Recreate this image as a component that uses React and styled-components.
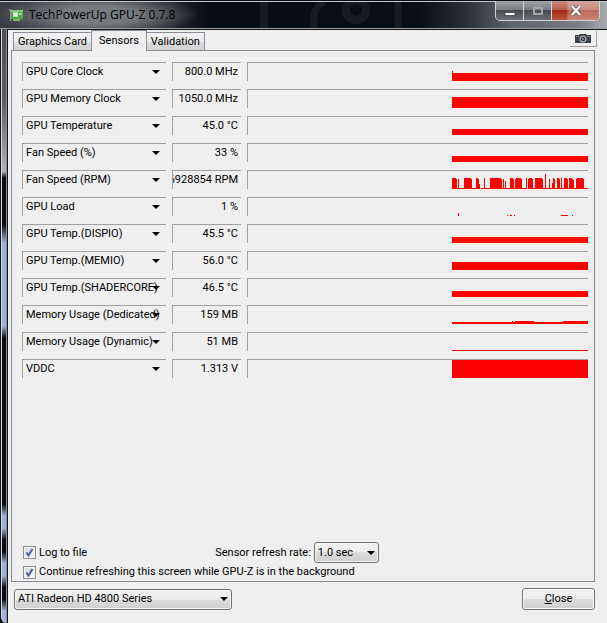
import React, { useState } from "react";
import styled, { createGlobalStyle } from "styled-components";

const GlobalStyle = createGlobalStyle`
  * {
    box-sizing: border-box;
  }

  body {
    background: #efefef;
    color: #000000;
    font-family: Roboto, "Liberation Sans", sans-serif;
    font-size: 11px;
    line-height: 16px;
    margin: 0;
  }

  button,
  select {
    color: inherit;
    font: inherit;
  }
`;

const Window = styled.div`
  background: #000000;
  display: flex;
  flex-direction: column;
  min-height: 100vh;
`;

const TitleBar = styled.header`
  align-items: flex-start;
  background:
    radial-gradient(ellipse 100px 22px at 98px 14px, rgba(150, 153, 157, 0.7) 40%, transparent 100%),
    linear-gradient(90deg, #3c4046 0, #24282e 170px, #080c13 210px, #0a0e15 420px, #2a2f37 465px, #5d6168 510px, #7b7f85 580px, #a9acb1 100%);
  border-bottom: 1px solid #9a9da1;
  border-top: 1px solid #0b0a10;
  box-shadow: inset 0 1px 0 #c9cbd1;
  display: flex;
  height: 29px;
  justify-content: space-between;
  overflow: hidden;
  padding-left: 9px;
  position: relative;
`;

const Title = styled.h1`
  align-items: center;
  display: flex;
  font-family: "Open Sans", "Noto Sans", sans-serif;
  font-size: 12px;
  font-weight: 400;
  gap: 6px;
  height: 28px;
  margin: 0;
  position: relative;
`;

const Backdrop = styled.svg`
  left: 250px;
  position: absolute;
  top: 1px;
`;

const WindowButtons = styled.div`
  border: 1px solid #d2d4d8;
  border-radius: 0 0 5px 5px;
  border-top: 0;
  display: flex;
  height: 20px;
  margin-right: 7px;
  overflow: hidden;
  position: relative;
`;

const WindowButton = styled.button`
  align-items: center;
  background: ${props =>
    props.$close
      ? "linear-gradient(90deg, transparent 30%, rgba(225, 205, 202, 0.4) 36%), linear-gradient(#c98c80 0, #b9604f 45%, #a32a12 50%, #b8583e 100%)"
      : "linear-gradient(#9fa2a6 0, #7b7e83 45%, #4a4d52 50%, #6a6d72 100%)"};
  border: 0;
  border-right: ${props => (props.$close ? "0" : "1px solid #d2d4d8")};
  display: flex;
  justify-content: center;
  padding: 0;
  width: ${props => (props.$close ? "47px" : "28px")};
`;

const Frame = styled.div`
  display: flex;
  flex: 1;
`;

const FrameEdge = styled.div`
  background: linear-gradient(
    #4c4e52 0,
    #5c5d62 12%,
    #8a868b 18%,
    #b5b0b4 24%,
    #0c0e12 25%,
    #0c0e12 33%,
    #9fb4d5 36%,
    #9fb4d5 50%,
    #0c0e12 52%,
    #0c0e12 80%,
    #9fb4d5 82%,
    #9fb4d5 84%,
    #0c0e12 86%,
    #0c0e12 88%,
    #9fb4d5 90%,
    #9fb4d5 92%,
    #0c0e12 94%,
    #0c0e12 96%,
    #9fb4d5 98%
  );
  border-bottom-left-radius: 6px;
  border-left: 1px solid #15151a;
  border-right: 1px solid #101216;
  box-shadow: inset 1px 0 0 #d5d9df, inset -1px 0 0 #8f9296;
  width: 8px;
`;

const Client = styled.main`
  background: #efefef;
  border-top: 1px solid #101216;
  display: flex;
  flex: 1;
  flex-direction: column;
  min-width: 0;
  padding: 0 12px 13px 3px;
`;

const TabBar = styled.div`
  align-items: flex-end;
  display: flex;
  height: 20px;
  justify-content: space-between;
`;

const TabList = styled.div`
  align-items: flex-end;
  display: flex;
  padding-left: 2px;
`;

const Tab = styled.button`
  background: ${props =>
    props.$active
      ? "#efefef"
      : "linear-gradient(#f2f2f2 0, #ebebeb 50%, #dddddd 50%, #d2d2d2 100%)"};
  border: 1px solid #8b8b98;
  border-bottom: 0;
  height: ${props => (props.$active ? "21px" : "18px")};
  line-height: ${props => (props.$active ? "18px" : "16px")};
  margin-bottom: ${props => (props.$active ? "-1px" : "0")};
  margin-right: -1px;
  padding: 0 ${props => (props.$active ? "7px" : "4px")};
  position: relative;
`;

const CameraButton = styled.button`
  align-items: center;
  background: #efefef;
  border: 0;
  border-bottom: 1px solid #a0a0a0;
  border-right: 1px solid #a0a0a0;
  display: flex;
  height: 16px;
  justify-content: center;
  margin: 0 -2px 3px 0;
  padding: 0;
  width: 27px;
`;

const Panel = styled.section`
  border: 1px solid #8b8b98;
  display: flex;
  flex: 1;
  flex-direction: column;
  justify-content: space-between;
  padding: 11px 6px 1px 10px;
`;

const SensorList = styled.div`
  display: flex;
  flex-direction: column;
  gap: 8px;
`;

const SensorRow = styled.div`
  display: grid;
  gap: 6px;
  grid-template-columns: 144px 69px 1fr;
  height: 19px;
`;

const Well = styled.div`
  border-left: 1px solid #a0a0a0;
  border-top: 1px solid #a0a0a0;
  display: flex;
  min-width: 0;
  overflow: hidden;
`;

const SensorPicker = styled(Well)`
  position: relative;
`;

const SensorSelect = styled.select`
  appearance: none;
  background: transparent;
  border: 0;
  outline: 0;
  padding: 0 0 0 3px;
  width: 100%;
`;

const Arrow = styled.svg`
  pointer-events: none;
  position: absolute;
  right: ${props => props.$right};
  top: 50%;
  transform: translateY(-50%);
`;

const Reading = styled(Well)`
  align-items: center;
  justify-content: flex-end;
  padding-right: 3px;
  white-space: nowrap;
`;

const Graph = styled(Well)`
  align-items: flex-end;
  justify-content: flex-end;
`;

const Options = styled.div`
  display: flex;
  flex-direction: column;
  gap: 1px;
  padding-left: 1px;
`;

const OptionRow = styled.div`
  align-items: center;
  display: flex;
`;

const CheckLabel = styled.label`
  align-items: center;
  display: flex;
  gap: 3px;
`;

const CheckWrap = styled.span`
  display: grid;
  height: 13px;
  width: 13px;

  & > * {
    grid-area: 1 / 1;
  }
`;

const CheckBox = styled.input`
  appearance: none;
  background: linear-gradient(135deg, #d3d7dc, #f6f7f8);
  border: 1px solid #8e8f8f;
  box-shadow: inset 0 0 0 1px #f4f4f4;
  height: 13px;
  margin: 0;
  width: 13px;

  & + svg {
    pointer-events: none;
    visibility: hidden;
  }

  &:checked + svg {
    visibility: visible;
  }
`;

const RefreshRate = styled.div`
  align-items: center;
  display: flex;
  gap: 3px;
  margin-left: 128px;
`;

const ComboWrap = styled.span`
  display: block;
  position: relative;
  width: ${props => props.$width};
`;

const Combo = styled.select`
  appearance: none;
  background: linear-gradient(#f1f1f1 0, #ebebeb 50%, #dcdcdc 50%, #cfcfcf 100%);
  border: 1px solid #707070;
  border-radius: 3px;
  box-shadow: inset 0 0 0 1px #f5f5f5;
  display: block;
  height: 21px;
  padding: 0 3px;
  width: 100%;
`;

const Footer = styled.footer`
  align-items: center;
  display: flex;
  justify-content: space-between;
  padding: 6px 0 0 3px;
`;

const CloseButton = styled.button`
  background: linear-gradient(#f2f2f2 0, #ebebeb 50%, #dddddd 50%, #cfcfcf 100%);
  border: 1px solid #6b7578;
  border-radius: 3px;
  box-shadow: inset 0 0 0 1px #f7f9fa;
  height: 22px;
  padding: 0;
  width: 73px;
`;

// each graph is a list of [x, width, height] runs on a 136 x 18 plot
const flat = height => [[0, 136, height]];

const FAN_RPM = [
  [0, 28, 1], [29, 46, 1], [76, 60, 1],
  [0, 4, 11], [4, 1, 10], [6, 1, 10], [12, 7, 11], [19, 1, 10],
  [24, 2, 11], [26, 1, 10], [27, 1, 5], [32, 1, 11], [38, 11, 11],
  [49, 1, 10], [51, 1, 10], [53, 1, 8], [58, 3, 11], [61, 1, 10],
  [63, 1, 10], [64, 5, 11], [69, 1, 10], [74, 1, 11], [76, 1, 10],
  [77, 3, 11], [80, 1, 10], [83, 7, 11], [90, 1, 10], [93, 1, 15],
  [97, 1, 10], [100, 1, 6], [101, 1, 11], [102, 1, 10], [105, 2, 11],
  [107, 1, 10], [109, 1, 11], [112, 3, 11], [115, 1, 10], [117, 3, 11],
  [120, 1, 10], [121, 1, 9], [124, 1, 10], [125, 6, 11], [131, 1, 10]
];

const GPU_LOAD = [
  [6, 1, 3], [55, 1, 1], [58, 2, 1], [62, 1, 1], [109, 7, 1], [120, 1, 1]
];

const SENSORS = [
  { name: "GPU Core Clock", value: "800.0 MHz", runs: [...flat(8), [0, 1, 10]] },
  { name: "GPU Memory Clock", value: "1050.0 MHz", runs: flat(11) },
  { name: "GPU Temperature", value: "45.0 °C", runs: flat(6) },
  { name: "Fan Speed (%)", value: "33 %", runs: flat(6) },
  { name: "Fan Speed (RPM)", value: "6928854 RPM", runs: FAN_RPM },
  { name: "GPU Load", value: "1 %", runs: GPU_LOAD },
  { name: "GPU Temp.(DISPIO)", value: "45.5 °C", runs: flat(6) },
  { name: "GPU Temp.(MEMIO)", value: "56.0 °C", runs: flat(8) },
  { name: "GPU Temp.(SHADERCORE)", value: "46.5 °C", runs: flat(6) },
  {
    name: "Memory Usage (Dedicated)",
    value: "159 MB",
    runs: [...flat(2), [60, 1, 3], [63, 19, 3], [111, 25, 3]]
  },
  { name: "Memory Usage (Dynamic)", value: "51 MB", runs: flat(1) },
  { name: "VDDC", value: "1.313 V", runs: flat(18) }
];

const DropArrow = ({ right }) => (
  <Arrow $right={right} width="8" height="4" viewBox="0 0 8 4" aria-hidden="true">
    <path d="M0 0h8L4 4z" fill="#000000" />
  </Arrow>
);

const CardIcon = () => (
  <svg width="14" height="14" viewBox="0 0 14 14" aria-hidden="true">
    <path d="M0 1h2v12H1V3H0z" fill="#8f9496" />
    <rect x="2" y="2" width="12" height="9" fill="#4fa653" />
    <rect x="2" y="2" width="12" height="2" fill="#7cc97c" />
    <rect x="4" y="4" width="5" height="5" fill="#c6d9c3" />
    <rect x="5" y="5" width="3" height="3" fill="#e4ece2" />
    <rect x="10" y="5" width="3" height="2" fill="#9be09a" />
    <rect x="4" y="11" width="7" height="2" fill="#8fae68" />
  </svg>
);

const CameraIcon = () => (
  <svg width="16" height="10" viewBox="0 0 16 10" aria-hidden="true">
    <path d="M0 1h4l1-1h6l1 1h4v8H0z" fill="#3b4147" />
    <path d="M1 2h3v1H1zM12 2h3v1h-3z" fill="#7d8489" />
    <circle cx="8" cy="5" r="3.5" fill="#a9afb3" />
    <circle cx="8" cy="5" r="2.3" fill="#3b4147" />
    <circle cx="8" cy="5" r="1" fill="#8d9498" />
  </svg>
);

const CheckMark = () => (
  <svg width="13" height="13" viewBox="0 0 13 13" aria-hidden="true">
    <path d="M3.5 6.5l2 3L9.5 3" fill="none" stroke="#4a5f97" strokeWidth="2" />
  </svg>
);

const TitleBackdrop = () => (
  <Backdrop width="160" height="27" viewBox="0 0 160 27" aria-hidden="true">
    <g fill="none" stroke="#171c24">
      <path d="M14 0v27" strokeWidth="8" />
      <path d="M64 27V14Q64 6 74 0" strokeWidth="7" />
      <circle cx="106" cy="8" r="10" strokeWidth="8" />
      <path d="M148 0v27" strokeWidth="7" />
    </g>
  </Backdrop>
);

const Sensor = ({ sensor }) => (
  <SensorRow>
    <SensorPicker>
      <SensorSelect aria-label={sensor.name}>
        <option>{sensor.name}</option>
      </SensorSelect>
      <DropArrow right="6px" />
    </SensorPicker>
    <Reading>
      <span>{sensor.value}</span>
    </Reading>
    <Graph>
      <svg width="136" height="18" viewBox="0 0 136 18" shapeRendering="crispEdges">
        {sensor.runs.map(([x, width, height], index) => (
          <rect key={index} x={x} y={18 - height} width={width} height={height} fill="#ff0000" />
        ))}
      </svg>
    </Graph>
  </SensorRow>
);

const CheckOption = ({ text }) => {
  const [checked, setChecked] = useState(true);

  return (
    <CheckLabel>
      <CheckWrap>
        <CheckBox
          type="checkbox"
          checked={checked}
          onChange={() => setChecked(!checked)}
        />
        <CheckMark />
      </CheckWrap>
      {text}
    </CheckLabel>
  );
};

const TABS = ["Graphics Card", "Sensors", "Validation"];

const App = () => {
  const [tab, setTab] = useState("Sensors");

  return (
    <Window>
      <GlobalStyle />
      <TitleBar>
        <TitleBackdrop />
        <Title>
          <CardIcon />
          TechPowerUp GPU-Z 0.7.8
        </Title>
        <WindowButtons>
          <WindowButton aria-label="Minimize">
            <svg width="12" height="12" viewBox="0 0 12 12">
              <path d="M1 7.5h10v3H1z" fill="#ffffff" stroke="#55585d" />
            </svg>
          </WindowButton>
          <WindowButton aria-label="Maximize">
            <svg width="12" height="10" viewBox="0 0 12 10">
              <path d="M2 2h8v6H2z" fill="none" stroke="#a5a7aa" strokeWidth="2" />
            </svg>
          </WindowButton>
          <WindowButton $close aria-label="Close window">
            <svg width="12" height="11" viewBox="0 0 12 11">
              <path d="M2 1l8 9M10 1L2 10" stroke="#6b4a48" strokeWidth="4" />
              <path d="M2 1l8 9M10 1L2 10" stroke="#ffffff" strokeWidth="2.5" />
            </svg>
          </WindowButton>
        </WindowButtons>
      </TitleBar>
      <Frame>
        <FrameEdge />
        <Client>
          <TabBar>
            <TabList role="tablist">
              {TABS.map(name => (
                <Tab
                  key={name}
                  role="tab"
                  aria-selected={tab === name}
                  $active={tab === name}
                  onClick={() => setTab(name)}
                >
                  {name}
                </Tab>
              ))}
            </TabList>
            <CameraButton aria-label="Screenshot">
              <CameraIcon />
            </CameraButton>
          </TabBar>
          <Panel>
            <SensorList>
              {SENSORS.map(sensor => (
                <Sensor key={sensor.name} sensor={sensor} />
              ))}
            </SensorList>
            <Options>
              <OptionRow>
                <CheckOption text="Log to file" />
                <RefreshRate>
                  <label htmlFor="refresh-rate">Sensor refresh rate:</label>
                  <ComboWrap $width="65px">
                    <Combo id="refresh-rate">
                      <option>1.0 sec</option>
                    </Combo>
                    <DropArrow right="4px" />
                  </ComboWrap>
                </RefreshRate>
              </OptionRow>
              <OptionRow>
                <CheckOption text="Continue refreshing this screen while GPU-Z is in the background" />
              </OptionRow>
            </Options>
          </Panel>
          <Footer>
            <ComboWrap $width="218px">
              <Combo aria-label="Graphics card">
                <option>ATI Radeon HD 4800 Series</option>
              </Combo>
              <DropArrow right="4px" />
            </ComboWrap>
            <CloseButton>
              <u>C</u>lose
            </CloseButton>
          </Footer>
        </Client>
      </Frame>
    </Window>
  );
};

export default App;
